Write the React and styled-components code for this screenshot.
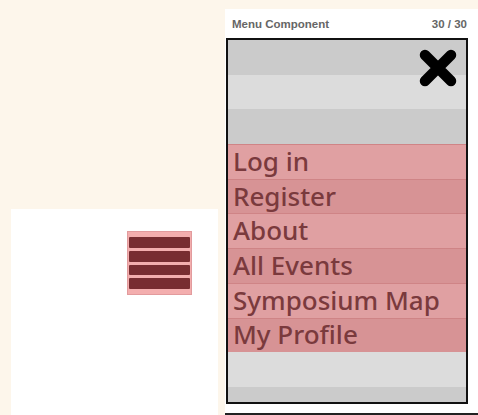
import React from "react";
import styled, { createGlobalStyle } from "styled-components";

const GlobalStyle = createGlobalStyle`
  html, body {
    margin: 0;
    padding: 0;
    background: #fdf6eb;
  }
  body {
    width: 478px;
    height: 415px;
    overflow: hidden;
    font-family: "Liberation Sans", Arial, sans-serif;
  }
`;

const rows = [
  { kind: "gray", shade: "dark" },
  { kind: "gray", shade: "light" },
  { kind: "gray", shade: "dark" },
  { kind: "menu", shade: "light", label: "Log in" },
  { kind: "menu", shade: "dark", label: "Register" },
  { kind: "menu", shade: "light", label: "About" },
  { kind: "menu", shade: "dark", label: "All Events" },
  { kind: "menu", shade: "light", label: "Symposium Map" },
  { kind: "menu", shade: "dark", label: "My Profile" },
  { kind: "gray", shade: "light" },
  { kind: "gray", shade: "dark" },
];

const App = () => {
  return (
    <>
      <GlobalStyle />
      <Page>
        <Preview>
          <Burger>
            <Bar />
            <Bar />
            <Bar />
            <Bar />
          </Burger>
        </Preview>
        <Card>
          <Header>
            <Title>Menu Component</Title>
            <Count>30 / 30</Count>
          </Header>
          <Frame>
            {rows.map((r, i) =>
              r.kind === "menu" ? (
                <MenuRow key={i} shade={r.shade}>
                  {r.label}
                </MenuRow>
              ) : (
                <GrayRow key={i} shade={r.shade} />
              )
            )}
            <Close viewBox="0 0 38 38">
              <path
                d="M6 6 L32 32 M32 6 L6 32"
                stroke="#000"
                strokeWidth="10.5"
                strokeLinecap="round"
              />
            </Close>
          </Frame>
        </Card>
      </Page>
    </>
  );
};
export default App;

const Page = styled.div`
  display: flex;
  flex-direction: row;
  align-items: flex-start;
  width: 478px;
  height: 415px;
  overflow: hidden;
`;

const Preview = styled.div`
  box-sizing: border-box;
  margin-left: 11px;
  margin-top: 209px;
  width: 207px;
  height: 206px;
  padding: 22px 26px 0 0;
  background: #ffffff;
  display: flex;
  justify-content: flex-end;
  align-items: flex-start;
`;

const Burger = styled.div`
  width: 65px;
  height: 64px;
  box-sizing: border-box;
  padding: 5px 1px;
  background: #f3aeae;
  border: 1px solid #e29b9d;
  display: flex;
  flex-direction: column;
  gap: 3px;
`;

const Bar = styled.div`
  height: 11px;
  background: #782d31;
  border-radius: 1px;
`;

const Card = styled.div`
  margin-left: 7px;
  margin-top: 9px;
  width: 253px;
  height: 406px;
  box-sizing: border-box;
  background: #ffffff;
  border-bottom: 2px solid #222;
`;

const Header = styled.div`
  height: 29px;
  padding: 0 11px 0 7px;
  display: flex;
  align-items: center;
  justify-content: space-between;
`;

const Title = styled.div`
  font-size: 11.5px;
  font-weight: bold;
  color: #666666;
`;

const Count = styled.div`
  font-size: 11.5px;
  font-weight: bold;
  color: #666666;
`;

const Frame = styled.div`
  position: relative;
  margin-left: 1px;
  width: 242px;
  height: 366px;
  box-sizing: border-box;
  border: 2px solid #111;
  overflow: hidden;
  display: flex;
  flex-direction: column;
`;

const GrayRow = styled.div`
  flex: 0 0 34.7px;
  background: ${(p) => (p.shade === "dark" ? "#cbcbcb" : "#dcdcdc")};
`;

const MenuRow = styled.div`
  flex: 0 0 34.7px;
  box-sizing: border-box;
  background: ${(p) => (p.shade === "dark" ? "#d79395" : "#e0a0a2")};
  border-top: 1px solid #cf8486;
  padding-left: 5px;
  padding-bottom: 2px;
  display: flex;
  align-items: center;
  font-family: "Noto Sans", "Lato", sans-serif;
  font-size: 26px;
  font-weight: 500;
  letter-spacing: 0;
  color: #7a3a3d;
  line-height: 1;
`;

const Close = styled.svg`
  position: absolute;
  left: 191px;
  top: 9px;
  width: 38px;
  height: 38px;
`;
